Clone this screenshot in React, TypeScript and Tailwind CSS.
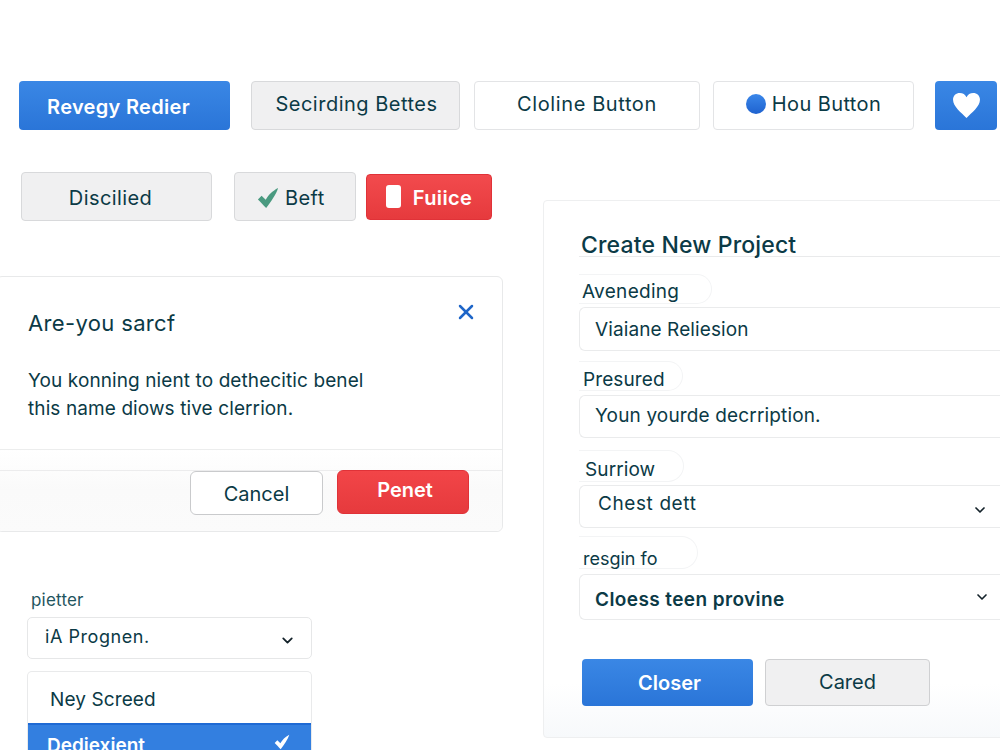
import { ChevronDown, X } from "lucide-react";

const ink = "text-[#0b3a46]";

function Check({ className }: { className: string }) {
  return (
    <svg viewBox="0 0 24 24" className={className}>
      <path d="M1 13.5 L5 9.5 L9.5 14 C12 9 17 4 23 1 C21 8 15 16 10 23 C7 20 4 16 1 13.5 Z" fill="currentColor" />
    </svg>
  );
}

function Heart() {
  return (
    <svg viewBox="0 0 28 26" className="h-[27px] w-[29px]">
      <path d="M14 25 C9 20 1 14 1 7.5 C1 3.5 4 1 7.5 1 C10.5 1 12.8 2.5 14 5 C15.2 2.5 17.5 1 20.5 1 C24 1 27 3.5 27 7.5 C27 14 19 20 14 25 Z" fill="#fff" />
    </svg>
  );
}

function FieldLabel({ text, className }: { text: string; className: string }) {
  return (
    <div className={`flex items-center rounded-r-full border-y border-r border-[#f3f4f5] ${ink} ${className}`}>
      {text}
    </div>
  );
}

export default function App() {
  return (
    <div className="relative h-[750px] w-[1000px] overflow-hidden bg-white font-['Inter','Liberation_Sans',sans-serif]">
      {/* Button row */}
      <div className="flex pl-[19px] pt-[81px] text-[20px] tracking-[0.4px]">
        <button className="h-[49px] w-[211px] rounded-[4px] bg-gradient-to-b from-[#3a87e5] to-[#2a75d8] pr-[12px] pt-[2px] font-semibold tracking-[0.3px] text-white">
          Revegy Redier
        </button>
        <button className={`ml-[21px] h-[49px] w-[209px] rounded-[4px] border border-[#d8d9db] bg-[#f0f0f1] pb-[3px] pl-[2px] tracking-[0.5px] ${ink}`}>
          Secirding Bettes
        </button>
        <button className={`ml-[14px] h-[49px] w-[226px] rounded-[4px] border border-[#e3e4e6] bg-white pb-[3px] tracking-[0.6px] ${ink}`}>
          Cloline Button
        </button>
        <button className={`ml-[13px] flex h-[49px] w-[201px] items-center justify-center gap-[6px] rounded-[4px] border border-[#e3e4e6] bg-white pb-[3px] ${ink}`}>
          <span className="h-[20px] w-[20px] rounded-full bg-gradient-to-b from-[#3a87ea] to-[#1f62cf]" />
          Hou Button
        </button>
        <button className="ml-[21px] flex h-[49px] w-[62px] items-center justify-center rounded-[4px] bg-gradient-to-b from-[#3a87e5] to-[#2a75d8]">
          <Heart />
        </button>
      </div>

      <div className="flex items-start">
        {/* Left column */}
        <div className="w-[503px] shrink-0">
          <div className="flex items-center pl-[21px] pt-[42px] text-[20px] tracking-[0.4px]">
            <button className={`h-[49px] w-[191px] rounded-[4px] border border-[#d8d9db] bg-[#f0f0f1] pr-[12px] pt-[2px] ${ink}`}>
              Discilied
            </button>
            <button className={`ml-[22px] flex h-[49px] w-[122px] items-center gap-[5px] rounded-[4px] border border-[#d8d9db] bg-[#f0f0f1] pl-[21px] pt-[2px] ${ink}`}>
              <Check className="h-[22px] w-[24px] text-[#4a9a80]" />
              Beft
            </button>
            <button className="ml-[10px] flex h-[46px] w-[126px] items-center justify-center gap-[12px] rounded-[4px] border border-[#e03238] bg-gradient-to-b from-[#f24a4d] to-[#e63a3d] font-semibold text-white">
              <span className="h-[23px] w-[15px] rounded-[3px] bg-white" />
              <span className="pt-[2px]">Fuiice</span>
            </button>
          </div>

          {/* Confirm dialog */}
          <div className="-ml-[4px] mt-[55px] h-[256px] w-[507px] rounded-[6px] border border-[#e8e9ea] bg-white">
            <div className="flex h-[173px] flex-col border-b border-[#eceded] pl-[31px] pr-[24px]">
              <div className="flex items-start justify-between pt-[20px]">
                <h2 className={`pt-[12px] text-[22px] font-normal leading-[28px] tracking-[0.35px] ${ink}`}>Are-you sarcf</h2>
                <X className="mt-[3px] h-[24px] w-[24px] text-[#1f66c8]" strokeWidth={2.5} />
              </div>
              <p className={`mt-[30px] text-[19px] leading-[28px] tracking-[0.1px] ${ink}`}>
                You konning nient to dethecitic benel
                <br />
                this name diows tive clerrion.
              </p>
            </div>
            <div className="h-[81px] rounded-b-[6px] bg-gradient-to-b from-white via-[#fafafa] to-[#fbfbfb] pt-[20px]">
              <div className="flex items-start justify-end border-t border-[#ececed] pr-[33px]">
                <button className={`h-[44px] w-[133px] rounded-[6px] border border-[#c9cacc] bg-white pt-[2px] text-[20px] ${ink}`}>
                  Cancel
                </button>
                <button className="-mt-[1px] ml-[14px] h-[44px] w-[132px] rounded-[6px] border border-[#e03238] bg-gradient-to-b from-[#f24548] to-[#e63a3d] pb-[5px] pl-[4px] text-[20px] font-semibold text-white">
                  Penet
                </button>
              </div>
            </div>
          </div>

          {/* Select with open list */}
          <div className="ml-[27px] mt-[57px] w-[285px]">
            <div className="pl-[4px] text-[17px] leading-[22px] tracking-[0.2px] text-[#1f5560]">pietter</div>
            <div className={`mt-[6px] flex h-[42px] items-center justify-between rounded-[5px] border border-[#e6e7e8] pl-[17px] pr-[15px] text-[18px] tracking-[0.55px] ${ink}`}>
              <span className="-mt-[3px]">iA Prognen.</span>
              <ChevronDown className="mt-[5px] h-[17px] w-[17px] text-[#14222a]" strokeWidth={2.5} />
            </div>
            <div className="mt-[12px] overflow-hidden rounded-t-[5px] border-x border-t border-[#e9eaeb]">
              <div className={`flex h-[51px] items-center pl-[22px] pt-[5px] text-[19px] tracking-[0.1px] ${ink}`}>Ney Screed</div>
              <div className="flex h-[50px] items-start justify-between border-t-2 border-[#1f6ad4] bg-[#337fe0] pl-[19px] pr-[20px] pt-[7px] text-[19px] font-semibold text-white">
                Dediexient
                <Check className="mt-[2px] h-[16px] w-[18px] text-white" />
              </div>
            </div>
          </div>
        </div>

        {/* Project form panel */}
        <div className="ml-[40px] mt-[70px] h-[538px] w-[480px] shrink-0 rounded-[4px] border border-[#eeeff0] bg-gradient-to-b from-white from-90% to-[#f7f9fb] pl-[35px]">
          <h2 className={`ml-[2px] mt-[30px] text-[23px] font-medium leading-[28px] tracking-[0.15px] ${ink}`}>Create New Project</h2>
          <div className="-mt-[3px] h-[1px] bg-[#e9eaeb]" />

          <div className="mt-[17px]">
            <FieldLabel text="Aveneding" className="h-[30px] w-[133px] pl-[3px] pt-[7px] text-[19px] tracking-[0.3px]" />
            <div className={`mt-[3px] flex h-[44px] items-center rounded-l-[6px] border-y border-l border-[#eaebec] pl-[15px] pt-[2px] text-[19px] tracking-[0.1px] ${ink}`}>
              Viaiane Reliesion
            </div>
          </div>
          <div className="mt-[10px]">
            <FieldLabel text="Presured" className="h-[30px] w-[104px] pl-[4px] pt-[8px] text-[19px] tracking-[0.1px]" />
            <div className={`mt-[4px] flex h-[43px] items-center rounded-l-[6px] border-y border-l border-[#eaebec] pl-[15px] text-[19px] tracking-[0.15px] ${ink}`}>
              Youn yourde decrription.
            </div>
          </div>
          <div className="mt-[12px]">
            <FieldLabel text="Surriow" className="h-[32px] w-[105px] pl-[6px] pt-[9px] text-[19px] tracking-[0.1px]" />
            <div className={`mt-[3px] flex h-[43px] items-center justify-between rounded-l-[6px] border-y border-l border-[#eaebec] pl-[18px] text-[19px] tracking-[0.6px] ${ink}`}>
              <span className="-mt-[5px]">Chest dett</span>
              <ChevronDown className="mr-[34px] mt-[7px] h-[16px] w-[16px] text-[#14222a]" strokeWidth={2.5} />
            </div>
          </div>
          <div className="mt-[8px]">
            <FieldLabel text="resgin fo" className="h-[33px] w-[119px] pl-[4px] pt-[12px] text-[18px]" />
            <div className={`mt-[5px] flex h-[46px] items-center justify-between rounded-l-[6px] border-y border-l border-[#eaebec] pl-[15px] pt-[7px] text-[19px] font-semibold tracking-[0.4px] ${ink}`}>
              Cloess teen provine
              <ChevronDown className="mr-[32px] -mt-[7px] h-[16px] w-[16px] text-[#14222a]" strokeWidth={2.5} />
            </div>
          </div>

          <div className="ml-[3px] mt-[39px] flex gap-[12px] text-[20px]">
            <button className="h-[47px] w-[171px] rounded-[4px] bg-gradient-to-b from-[#3a87e5] to-[#2a75d8] pl-[4px] font-semibold text-white">
              Closer
            </button>
            <button className={`h-[47px] w-[165px] rounded-[4px] border border-[#cfd0d2] bg-[#f0f0f1] pb-[2px] ${ink}`}>
              Cared
            </button>
          </div>
        </div>
      </div>
    </div>
  );
}
